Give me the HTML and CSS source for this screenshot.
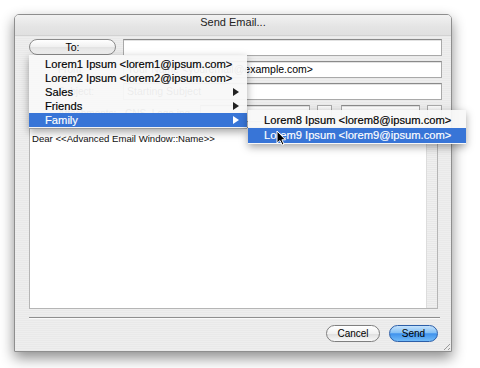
FILE: index.html
```html
<!DOCTYPE html>
<html lang="en">
<head>
    <meta charset="UTF-8">
    <title>Send Email...</title>
    <link rel="stylesheet" href="styles.css">
</head>
<body>
    <div class="stage">
        <div class="window">
            <div class="titlebar">Send Email...</div>
            <div class="content">
                <div class="form">
                    <button class="to-btn">To:</button>
                    <div class="field"></div>

                    <div class="label">From:</div>
                    <div class="field">Your Name &lt;youremail@example.com&gt;</div>

                    <div class="label">Subject:</div>
                    <div class="field">Starting Subject</div>

                    <div class="label">Attachments:</div>
                    <div class="attach-row">
                        <span class="attach-name">CNS_Logo.jpg</span>
                        <div class="field small-a"></div>
                        <div class="square"></div>
                        <div class="field small-b"></div>
                        <div class="square"></div>
                    </div>
                </div>

                <div class="body-box">
                    <div class="body-text">Dear &lt;&lt;Advanced Email Window::Name&gt;&gt;</div>
                    <div class="scroll-track"></div>
                </div>

                <div class="separator"></div>

                <div class="buttons">
                    <button class="pill">Cancel</button>
                    <button class="pill default">Send</button>
                </div>
            </div>
            <div class="grip"></div>

            <!-- popup menu from the To: button -->
            <ul class="menu main-menu">
                <li>Lorem1 Ipsum &lt;lorem1@ipsum.com&gt;</li>
                <li>Lorem2 Ipsum &lt;lorem2@ipsum.com&gt;</li>
                <li class="sub">Sales</li>
                <li class="sub">Friends</li>
                <li class="sub active">Family</li>
            </ul>
            <ul class="menu sub-menu">
                <li>Lorem8 Ipsum &lt;lorem8@ipsum.com&gt;</li>
                <li class="active">Lorem9 Ipsum &lt;lorem9@ipsum.com&gt;</li>
            </ul>
            <svg class="cursor" width="11" height="16" viewBox="0 0 11 16">
                <path d="M1 1 L1 13 L4 10.5 L6.2 15 L8 14.2 L5.9 9.8 L9.5 9.8 Z" fill="#000" stroke="#fff" stroke-width="1"/>
            </svg>
        </div>
    </div>
</body>
</html>
```

FILE: styles.css
```css
body {
    margin: 0;
    background: #fff;
    font-family: "Liberation Sans", Arial, sans-serif;
    color: #000;
}
.stage {
    padding: 14px 28px 16px 14px;
}
.window {
    position: relative;
    width: 436px;
    height: 336px;
    border: 1px solid #8e8e8e;
    border-radius: 5px 5px 0 0;
    box-shadow: 0 6px 14px rgba(0, 0, 0, 0.45);
    background: repeating-linear-gradient(to bottom, #eeeeee 0, #eeeeee 1px, #e9e9e9 1px, #e9e9e9 2px);
    display: flex;
    flex-direction: column;
}
.titlebar {
    height: 20px;
    line-height: 15px;
    text-align: center;
    font-size: 11px;
    color: #222;
    border-radius: 4px 4px 0 0;
    background: linear-gradient(to bottom, #f2f2f2, #e4e4e4 60%, #e0e0e0);
    border-bottom: 1px solid #d2d2d2;
}
.content {
    flex: 1;
    padding: 3px 11px 0 14px;
    display: flex;
    flex-direction: column;
}
.form {
    display: grid;
    grid-template-columns: 94px 1fr;
    grid-auto-rows: 17px;
    row-gap: 5px;
    font-size: 10px;
}
.label {
    padding-left: 29px;
    line-height: 17px;
    color: #000;
}
.field {
    background: #fff;
    border: 1px solid #a9a9a9;
    border-top-color: #8a8a8a;
    box-shadow: inset 0 1px 0 #e2e2e2;
    font-size: 10.5px;
    line-height: 15px;
    padding-left: 3px;
    white-space: nowrap;
    overflow: hidden;
}
.to-btn {
    width: 87px;
    height: 16px;
    padding: 0;
    border: 1px solid #8b8b8b;
    border-radius: 8px;
    background: linear-gradient(to bottom, #ffffff, #f0f0f0 50%, #e2e2e2 51%, #f6f6f6);
    font-family: inherit;
    font-size: 10.5px;
    color: #000;
}
.attach-row {
    display: flex;
    align-items: stretch;
}
.attach-name {
    width: 75px;
    line-height: 17px;
    padding-left: 2px;
}
.small-a {
    width: 105px;
}
.small-b {
    width: 74px;
    margin-left: 9px;
}
.square {
    width: 13px;
    margin-left: 7px;
    border: 1px solid #a9a9a9;
    background: linear-gradient(to bottom, #fafafa, #e6e6e6);
}
.body-box {
    margin-top: 5px;
    width: 407px;
    height: 180px;
    border: 1px solid #b5b5b5;
    border-top-color: #999;
    background: #fff;
    display: flex;
}
.body-text {
    flex: 1;
    font-size: 9.6px;
    padding: 5px 2px;
    color: #111;
}
.scroll-track {
    width: 10px;
    border-left: 1px solid #dcdcdc;
    background: repeating-linear-gradient(to bottom, #efefef 0, #efefef 1px, #e8e8e8 1px, #e8e8e8 2px);
}
.separator {
    margin-top: 8px;
    width: 411px;
    height: 1px;
    background: #8f8f8f;
    border-bottom: 1px solid #fafafa;
}
.buttons {
    margin-top: 6px;
    padding-right: 2px;
    display: flex;
    justify-content: flex-end;
    gap: 9px;
}
.pill {
    height: 17px;
    padding: 0;
    width: 54px;
    border: 1px solid #7f7f7f;
    border-radius: 9px;
    background: linear-gradient(to bottom, #ffffff, #f1f1f1 50%, #dedede 51%, #f8f8f8);
    font-family: inherit;
    font-size: 10px;
    color: #000;
}
.pill.default {
    width: 49px;
    border-color: #2d5fa8;
    background: linear-gradient(to bottom, #c4e2fc, #84c0f5 45%, #3f92ec 52%, #72bbf8);
}
.grip {
    position: absolute;
    right: 1px;
    bottom: 1px;
    width: 9px;
    height: 9px;
    background: repeating-linear-gradient(135deg, transparent 0, transparent 2px, #9a9a9a 2px, #9a9a9a 3px);
    clip-path: polygon(100% 0, 100% 100%, 0 100%);
}
.menu {
    position: absolute;
    margin: 0;
    list-style: none;
    background: rgba(248, 248, 248, 0.95);
    box-shadow: 0 3px 8px rgba(0, 0, 0, 0.35);
    font-size: 11.2px;
    color: #000;
    -webkit-text-stroke: 0.15px currentColor;
}
.menu li {
    position: relative;
    height: 14px;
    line-height: 14px;
    padding-left: 16px;
    white-space: nowrap;
}
.menu li.active {
    background: #3875d7;
    color: #fff;
}
.menu li.sub::after {
    content: "";
    position: absolute;
    right: 8px;
    top: 3px;
    border-left: 6px solid #222;
    border-top: 4px solid transparent;
    border-bottom: 4px solid transparent;
}
.menu li.sub.active::after {
    border-left-color: #fff;
}
.main-menu {
    left: 14px;
    top: 40px;
    width: 218px;
    padding: 2px 0 1px;
    border-bottom: 1px solid #9a9a9a;
}
.sub-menu {
    left: 233px;
    top: 95px;
    width: 218px;
    padding: 3px 0 1px;
}
.sub-menu li {
    height: 15px;
    line-height: 15px;
}
.cursor {
    position: absolute;
    left: 261px;
    top: 115px;
}
```
